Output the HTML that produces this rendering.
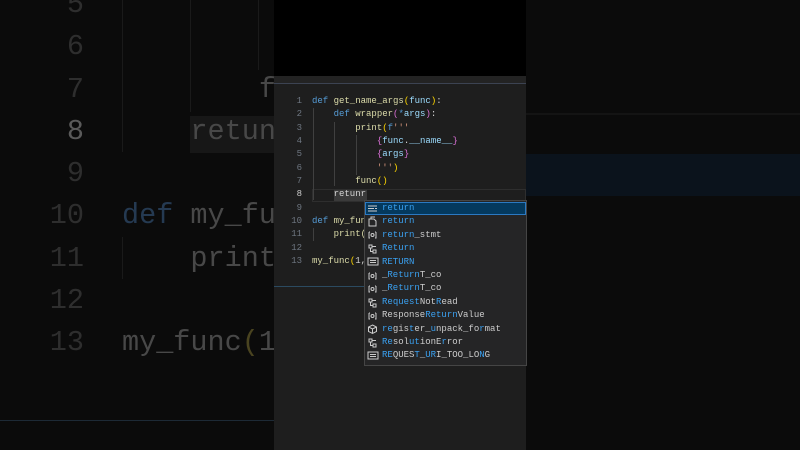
<!DOCTYPE html>
<html style="width:800px;height:450px;overflow:hidden"><head><meta charset="utf-8"><style>
*{margin:0;padding:0;box-sizing:border-box}
body{width:800px;height:450px;background:#0b0b0b;position:relative;overflow:hidden;font-family:"Liberation Mono",monospace}
.a{position:absolute;white-space:pre}
.big{font-size:28.5px;line-height:42.3px}
.ed{font-size:9px;line-height:13.33px}
.k{color:#569cd6}.f{color:#dcdcaa}.y{color:#ffd700}.p{color:#da70d6}.s{color:#ce9178}.v{color:#9cdcfe}
.w{color:#d4d4d4}
.m{color:#3aa0f0}.n{color:#cccccc}
</style></head><body>
<!-- left big bg -->
<div class="a" style="left:190px;top:116px;width:84px;height:37px;background:#171717"></div>
<div class="a" style="left:122px;top:0;width:1px;height:152px;background:#1a1a1a"></div>
<div class="a" style="left:190px;top:0;width:1px;height:112px;background:#1a1a1a"></div>
<div class="a" style="left:258px;top:0;width:1px;height:70px;background:#1a1a1a"></div>
<div class="a" style="left:122px;top:237px;width:1px;height:42px;background:#1a1a1a"></div>
<div class="a big" style="left:40px;top:-16px;width:44px;text-align:right;color:#2e2e2e">5
6
7
<span style="color:#5a5a5a">8</span>
9
10
11
12
13</div>
<div class="a big" style="left:122px;top:-16px;color:#484848">

        f
    retun

<span style="color:#253a52">def</span> my_fu
    print

my_func<span style="color:#4a4420">(</span>1</div>
<div class="a" style="left:0;top:420px;width:274px;height:1px;background:#1d2a36"></div>
<!-- right bg -->
<div class="a" style="left:526px;top:113px;width:274px;height:2px;background:#141414"></div>
<div class="a" style="left:526px;top:154px;width:274px;height:42px;background:#0b131c"></div>
<!-- top center black -->
<div class="a" style="left:274px;top:0;width:252px;height:76px;background:#000"></div>
<!-- panel -->
<div class="a" style="left:274px;top:76px;width:252px;height:374px;background:#1e1e1e"></div>
<div class="a" style="left:274px;top:76px;width:252px;height:8px;background:#232323"></div>
<div class="a" style="left:274px;top:83px;width:252px;height:1px;background:#3c4352"></div>
<div class="a" style="left:274px;top:286px;width:252px;height:1px;background:#2b4a60"></div>
<div class="a" style="left:312px;top:189px;width:214px;height:13px;border:1px solid #2e2e2e"></div>
<div class="a" style="left:334px;top:190px;width:33px;height:11px;background:#3a3a3a"></div>
<div class="a" style="left:313px;top:108px;width:1px;height:92px;background:#404040"></div>
<div class="a" style="left:334px;top:122px;width:1px;height:64px;background:#404040"></div>
<div class="a" style="left:356px;top:135px;width:1px;height:40px;background:#404040"></div>
<div class="a" style="left:313px;top:228px;width:1px;height:13px;background:#404040"></div>
<div class="a ed" style="left:282px;top:95px;width:20px;text-align:right;color:#6e7681">1
2
3
4
5
6
7
<span style="color:#ccc">8</span>
9
10
11
12
13</div>
<div class="a ed w" style="left:312px;top:95px"><span class="k">def</span> <span class="f">get_name_args</span><span class="y">(</span><span class="v">func</span><span class="y">)</span>:
    <span class="k">def</span> <span class="f">wrapper</span><span class="p">(</span><span class="k">*</span><span class="v">args</span><span class="p">)</span>:
        <span class="f">print</span><span class="y">(</span><span class="k">f</span><span class="s">'''</span>
            <span class="p">{</span><span class="v">func</span>.<span class="v">__name__</span><span class="p">}</span>
            <span class="p">{</span><span class="v">args</span><span class="p">}</span>
            <span class="s">'''</span><span class="y">)</span>
        <span class="f">func</span><span class="y">()</span>
    <span class="w">retunr</span>

<span class="k">def</span> <span class="f">my_fun</span>
    <span class="f">print(</span>

<span class="f">my_func</span><span class="y">(</span>1,</div>
<!-- suggest widget -->
<div class="a" style="left:364px;top:200px;width:163px;height:166px;background:#252526;border:1px solid #454545"></div>
<div class="a" style="left:365px;top:202px;width:161px;height:13px;background:#04395e;border:1px solid #2b79c2"></div>
<div class="a ed" style="left:382px;top:202px;line-height:13.4px"><span class="m">return</span>
<span class="m">return</span>
<span class="m">return</span><span class="n">_stmt</span>
<span class="m">Return</span>
<span class="m">RETURN</span>
<span class="n">_</span><span class="m">Return</span><span class="n">T_co</span>
<span class="n">_</span><span class="m">Return</span><span class="n">T_co</span>
<span class="m">Re</span><span class="m">quest</span><span class="n">Not</span><span class="m">R</span><span class="n">ead</span>
<span class="n">Response</span><span class="m">Return</span><span class="n">Value</span>
<span class="m">re</span><span class="n">gis</span><span class="m">t</span><span class="n">er_</span><span class="m">u</span><span class="n">npack_fo</span><span class="m">r</span><span class="n">mat</span>
<span class="m">Re</span><span class="n">sol</span><span class="m">ut</span><span class="n">ionE</span><span class="m">r</span><span class="n">ror</span>
<span class="m">RE</span><span class="n">QUES</span><span class="m">T</span><span class="n">_</span><span class="m">UR</span><span class="n">I_TOO_LO</span><span class="m">N</span><span class="n">G</span></div>
<svg class="a" style="left:367px;top:203px" width="12" height="162" fill="none" stroke="#ccc" stroke-width="1">
<path d="M1 3h9M1 5.5h6M1 8h9M8 5.5h2"/>
<path d="M2 16h5l2 2v5H2zM4 16v-2h4"/>
<path d="M2 29v6h1M9 29v6h-1M2 29h1M9 29h-1"/><circle cx="5.5" cy="32" r="1.5"/>
<path d="M2 42h3v3H2zM6 47h3v3H6zM3.5 45v3.5H6M5 43.5h4"/>
<path d="M1 55h10v7H1zM3 57.5h6M3 59.5h6"/>
<path d="M2 70v6h1M9 70v6h-1M2 70h1M9 70h-1"/><circle cx="5.5" cy="73" r="1.5"/>
<path d="M2 83v6h1M9 83v6h-1M2 83h1M9 83h-1"/><circle cx="5.5" cy="86" r="1.5"/>
<path d="M2 96h3v3H2zM6 101h3v3H6zM3.5 99v3.5H6M5 97.5h4"/>
<path d="M2 110v6h1M9 110v6h-1M2 110h1M9 110h-1"/><circle cx="5.5" cy="113" r="1.5"/>
<path d="M5.5 122l4 2v4.5l-4 2-4-2V124zM1.5 124l4 2 4-2M5.5 126v4.5"/>
<path d="M2 136h3v3H2zM6 141h3v3H6zM3.5 139v3.5H6M5 137.5h4"/>
<path d="M1 149h10v7H1zM3 151.5h6M3 153.5h6"/>
</svg>
</body></html>
